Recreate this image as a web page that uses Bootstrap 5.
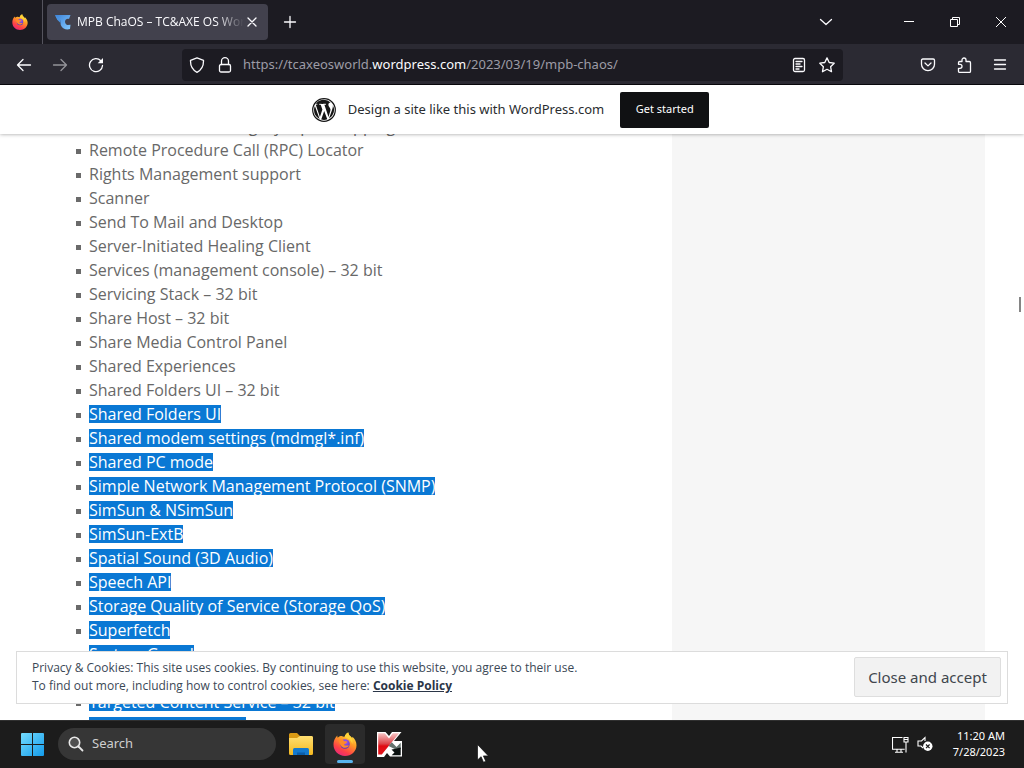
<!DOCTYPE html>
<html lang="en">
<head>
<meta charset="utf-8">
<meta name="viewport" content="width=device-width, initial-scale=1">
<title>MPB ChaOS – TC&amp;AXE OS World</title>
<link href="https://cdn.jsdelivr.net/npm/bootstrap@5.3.0/dist/css/bootstrap.min.css" rel="stylesheet">
<style>
body { font-family: "Noto Sans", "Open Sans", sans-serif; height: 100vh; background: #fff; }
svg { display: block; }
.tool { background: none; border: 0; padding: 0; color: #fbfbfe; display: flex; align-items: center; justify-content: center; flex: none; }
.ln { fill: none; stroke: currentColor; stroke-width: 1.3; stroke-linecap: round; stroke-linejoin: round; }

.title-strip { height: 44px; background: #1c1b22; }
.pinned { width: 43px; height: 44px; border-right: 1px solid #55545e; padding-right: 2px; }
.browser-tab { width: 221px; height: 36px; margin-left: 4px; padding: 0 8px; background: #42414d; border-radius: 4px; color: #fbfbfe; font-family: "Open Sans", sans-serif; font-size: 12px; }
.tab-name { flex: 1; overflow: hidden; white-space: nowrap; margin-left: 6px; -webkit-mask-image: linear-gradient(to left, transparent, #000 28px); mask-image: linear-gradient(to left, transparent, #000 28px); }
.new-tab { width: 43px; height: 36px; }
.win { width: 46px; height: 44px; }
.list-tabs { width: 46px; height: 44px; margin-right: 37px; }

.nav-strip { height: 41px; background: #2b2a33; border-bottom: 1px solid #08070c; padding: 1px 6px 0; }
.nav-strip .tool { width: 36px; height: 36px; }
.address { height: 32px; margin: 0 67px 0 68px; background: #1c1b22; border-radius: 4px; padding: 0 2px 0 1px; color: #9c9ba6; font-size: 13px; }
.address .tool { width: 28px; height: 32px; }
.url { white-space: nowrap; overflow: hidden; outline: 0; margin-left: 4px; }
.url b { font-weight: 400; color: #fbfbfe; }

.viewport { overflow: hidden; min-height: 0; }
.promo { top: 0; z-index: 3; height: 49px; padding-right: 3px; background: #fff; box-shadow: 0 0 4px rgba(0,0,0,.4); color: #2a2d30; font-size: 13px; }
.promo .start { height: 36px; width: 89px; background: #101113; border: 0; border-radius: 2px; color: #fff; font-size: 11px; }
.feature-list { padding: 29px 0 0 76px; font-family: "Open Sans", sans-serif; font-size: 16px; color: #686868; list-style: none; }
.feature-list li { height: 24px; display: flex; align-items: center; white-space: nowrap; }
.feature-list li::before { content: ""; width: 5px; height: 5px; margin-right: 8px; margin-top: 2px; background: #6a6a6a; }
.sel { background: #0a78d4; color: #fff; line-height: 18px; }
.side-panel { width: 313px; background: #f6f6f6; margin-right: 39px; }
.thumb { right: 3px; top: 212px; width: 2px; height: 15px; background: #858585; }
.cookies { left: 16px; right: 16px; bottom: 16px; z-index: 3; background: #fff; border: 1px solid #dcdcdc; padding: 5px 6px 6px 15px; font-family: "Open Sans", sans-serif; font-size: 12px; line-height: 18px; color: #3b4856; }
.cookies a { color: #2b3648; font-weight: 700; }
.cookies button { width: 147px; height: 40px; flex: none; background: #f2f2f2; border: 1px solid #dedede; border-radius: 2px; color: #40464d; font-family: "Noto Sans", sans-serif; font-size: 15px; }

.taskbar { height: 48px; background: #1c1c1c; border-top: 1px solid #303030; color: #fff; padding: 0 19px 1px 12px; }
.taskbar .tool { width: 40px; height: 40px; }
.find { width: 218px; height: 32px; border-radius: 16px; background: #363636; margin: 0 5px 0 6px; padding-left: 10px; }
.find input { background: none; border: 0; outline: 0; width: 160px; padding: 0; color: #fff; font-size: 13px; }
.find input::placeholder { color: #cfcfcf; opacity: 1; }
.running { background: #2b2b2b !important; border-radius: 4px; position: relative; }
.running::after { content: ""; position: absolute; bottom: 1px; left: 12px; width: 16px; height: 3px; border-radius: 2px; background: #58b4ee; }
.clock { min-width: 56px; font-size: 11px; line-height: 16px; }
.pointer { left: 477px; top: 744px; z-index: 9; }
</style>
</head>
<body class="d-flex flex-column overflow-hidden">
<svg width="0" height="0" class="position-absolute" aria-hidden="true">
  <defs>
    <linearGradient id="fire" x1=".8" y1="0" x2=".25" y2="1"><stop offset="0" stop-color="#fff04a"/><stop offset=".4" stop-color="#ff9a25"/><stop offset=".75" stop-color="#ff4048"/><stop offset="1" stop-color="#e5267e"/></linearGradient>
    <radialGradient id="orb" cx=".55" cy=".3" r=".7"><stop offset="0" stop-color="#a558f5"/><stop offset="1" stop-color="#5038bd"/></radialGradient>
    <symbol id="fox" viewBox="0 0 24 24">
      <path fill="url(#fire)" d="M2.500 5.800 4.200 3.600l.4 2.200C6 4.400 7.600 4 8.500 4l3 1C12 2.700 14 .8 15.300.4c.1 2 1.200 3 2.700 4.400.6.600.8 1.200 1 1.800l.5-1.900c2.300 2.200 4 5.100 4 8.500C23.500 19.300 18.400 24 12 24S.5 19 .5 12.800C.5 10 1.200 7.800 2.500 5.800z"/>
      <circle cx="12" cy="12" r="4.800" fill="url(#orb)"/>
      <path fill="#ff8a28" d="M5.500 8.500c2-1.700 4.500-1 5.800.7l3 .2c-.3 1.600-1.800 2-2.900 2.600-.6.700.1 1.500 1.200 1.600 1.500.1 2.400-.4 3.400 0-1.300 2.300-4.500 3-6.800 1.300-2.300-1.600-2.700-4-3.700-6.400z"/>
      <path fill="#ffd238" d="M15.300.4c.1 2 1.200 3 2.700 4.400 1.500 1.500 2 4.500 1.300 7.200-.5-3-3-5.300-7.800-7C12 2.700 14 .8 15.300.4z"/>
    </symbol>
    <linearGradient id="tile" x1="0" y1="0" x2="1" y2="1"><stop offset="0" stop-color="#74dcff"/><stop offset="1" stop-color="#139bea"/></linearGradient>
    <linearGradient id="gold" x1="0" y1="0" x2="0" y2="1"><stop offset="0" stop-color="#ffdf72"/><stop offset="1" stop-color="#f5b81e"/></linearGradient>
    <linearGradient id="sky" x1="0" y1="0" x2="1" y2="1"><stop offset="0" stop-color="#3c82d8"/><stop offset="1" stop-color="#83c9ff"/></linearGradient>
    <linearGradient id="rd" x1="0" y1="0" x2="0" y2="1"><stop offset="0" stop-color="#f7c3c3"/><stop offset=".5" stop-color="#dc4247"/><stop offset=".6" stop-color="#e00b12"/><stop offset="1" stop-color="#e2161d"/></linearGradient>
  </defs>
</svg>

<header>
  <div class="title-strip d-flex align-items-center">
    <button class="tool pinned" aria-label="Firefox View"><svg width="16" height="16"><use href="#fox"/></svg></button>
    <div class="browser-tab d-flex align-items-center">
      <svg width="16" height="16" viewBox="0 0 16 16"><path fill="url(#sky)" d="M0 1h15.500L14 5c-1.500-.8-4 .2-4 2.800 0 2 1.500 3.200 2.500 3.200l3-.3-.5 4.300c-3 1-7.500.2-9-3.500C5.300 9.800 5.600 8 6 6.500L2.500 6z"/><path fill="#4b93e0" d="M0 1l6 5.500L5.500 9 2.500 6z"/></svg>
      <span class="tab-name">MPB ChaOS – TC&amp;AXE OS World</span>
      <button class="tool" aria-label="Close tab"><svg width="16" height="16" viewBox="0 0 16 16"><path class="ln" d="M4 4l8 8M12 4l-8 8"/></svg></button>
    </div>
    <button class="tool new-tab" aria-label="New tab"><svg width="16" height="16" viewBox="0 0 16 16"><path class="ln" d="M8 2.500v11M2.500 8h11"/></svg></button>
    <button class="tool list-tabs ms-auto" aria-label="List all tabs"><svg width="16" height="16" viewBox="0 0 16 16"><path class="ln" d="M2.500 5.500 8 10.500l5.500-5"/></svg></button>
    <button class="tool win" aria-label="Minimize"><svg width="10" height="10"><path d="M0 4.500h10" stroke="#fff"/></svg></button>
    <button class="tool win" aria-label="Restore"><svg width="10" height="10"><path fill="none" stroke="#fff" d="M.5 2.500h7v7h-7zM2.500 2V.5h7v7H8"/></svg></button>
    <button class="tool win" aria-label="Close"><svg width="10" height="10"><path d="M0 0l10 10M10 0 0 10" stroke="#fff"/></svg></button>
  </div>
  <nav class="nav-strip d-flex align-items-center" aria-label="Browser">
    <button class="tool" aria-label="Back"><svg width="16" height="16" viewBox="0 0 16 16"><path class="ln" d="M14.500 8H1.500M7 2.500 1.500 8 7 13.500"/></svg></button>
    <button class="tool opacity-50" aria-label="Forward"><svg width="16" height="16" viewBox="0 0 16 16"><path class="ln" d="M1.500 8h13M9 2.500 14.500 8 9 13.500"/></svg></button>
    <button class="tool" aria-label="Reload"><svg width="16" height="16" viewBox="0 0 16 16"><path class="ln" d="M12.800 3.800A6.500 6.500 0 1 0 14.500 8.500"/><path fill="currentColor" d="M15 1v5.300H9.700z"/></svg></button>
    <div class="address d-flex align-items-center flex-grow-1">
      <button class="tool" aria-label="Tracking protection"><svg width="16" height="16" viewBox="0 0 16 16"><path class="ln" d="M8 .8 14.500 3.300c.2 5.500-1.500 9.500-6.500 12C3 12.800 1.300 8.800 1.500 3.300z"/></svg></button>
      <button class="tool" aria-label="Site information"><svg width="16" height="16" viewBox="0 0 16 16"><rect class="ln" x="2.500" y="7.500" width="11" height="7.500" rx="1.500"/><path class="ln" d="M4.500 7.500V4.200a3.500 3.500 0 0 1 7 0v3.300"/></svg></button>
      <div class="url flex-grow-1" role="textbox" contenteditable="true" spellcheck="false" aria-label="Address">https://tcaxeosworld.<b>wordpress.com</b>/2023/03/19/mpb-chaos/</div>
      <button class="tool" aria-label="Reader view"><svg width="16" height="16" viewBox="0 0 16 16"><rect class="ln" x="2.500" y="1.500" width="11" height="13" rx="1.500"/><path class="ln" d="M5 4.500h6M5 7h4M5 9.500h6M5 12h3"/></svg></button>
      <button class="tool" aria-label="Bookmark"><svg width="16" height="16" viewBox="0 0 16 16"><path class="ln" d="M8 .9 10.200 5.500l5 .7-3.600 3.500.9 5L8 12.300l-4.500 2.400.9-5L.8 6.200l5-.7z"/></svg></button>
    </div>
    <button class="tool" aria-label="Pocket"><svg width="16" height="16" viewBox="0 0 16 16"><path class="ln" d="M2.800 2h10.400c.8 0 1.300.5 1.300 1.300V7.200a6.500 6.500 0 0 1-13 0V3.300C1.500 2.500 2 2 2.800 2z"/><path class="ln" d="M5 6l3 2.900L11 6"/></svg></button>
    <button class="tool" aria-label="Extensions"><svg width="16" height="16" viewBox="0 0 16 16"><path class="ln" d="M6 4.500V3a2 2 0 0 1 4 0v1.500h3.300c.7 0 1.200.5 1.200 1.200v8.600c0 .7-.5 1.200-1.200 1.200H3.700c-.7 0-1.200-.5-1.200-1.200v-3H4a2 2 0 0 0 0-4H2.500V5.700c0-.7.500-1.200 1.200-1.200z"/></svg></button>
    <button class="tool" aria-label="Menu"><svg width="16" height="16" viewBox="0 0 16 16"><path class="ln" d="M2.500 3h11M2.500 7.500h11M2.500 12h11"/></svg></button>
  </nav>
</header>

<main class="viewport position-relative d-flex flex-grow-1">
  <div class="promo position-absolute w-100 d-flex align-items-center justify-content-center">
    <svg width="24" height="24" viewBox="0 0 24 24"><circle cx="12" cy="12" r="11.300" fill="none" stroke="#151515" stroke-width="1.200"/><path fill="#151515" d="M2 12c0-1.500.3-2.800.9-4.100l4.700 13A10 10 0 0 1 2 12zm16.500-.5c0 1-.4 2.200-.9 3.800l-1.100 3.800-4.100-12.300 1.300-.1c.6-.1.500-1-.1-.9 0 0-1.800.1-3 .1l-3-.1c-.6 0-.7.900-.1.900l1.200.1 1.700 4.800-2.500 7.300L3.800 6.700l1.300-.1c.6-.1.5-1-.1-.9l-1.400.1a10 10 0 0 1 15.100-1.200c-1.500-.2-2.300 1-2.300 2.100 0 1 .6 1.800 1.200 2.800.5.800.9 1.700.9 2zM12.200 12.900l3.100 8.400A10 10 0 0 1 9.200 21.500zM20.800 7.200A10 10 0 0 1 17 20.600l3.100-8.800c.5-1.500.8-2.700.8-3.800z"/></svg>
    <span class="ms-2 ps-1 me-3">Design a site like this with WordPress.com</span>
    <button class="start">Get started</button>
  </div>
  <article class="flex-grow-1">
    <ul class="feature-list mb-0">
      <li>Remote Audio and Legacy Input Mapping</li>
      <li>Remote Procedure Call (RPC) Locator</li>
      <li>Rights Management support</li>
      <li>Scanner</li>
      <li>Send To Mail and Desktop</li>
      <li>Server-Initiated Healing Client</li>
      <li>Services (management console) – 32 bit</li>
      <li>Servicing Stack – 32 bit</li>
      <li>Share Host – 32 bit</li>
      <li>Share Media Control Panel</li>
      <li>Shared Experiences</li>
      <li>Shared Folders UI – 32 bit</li>
      <li><span class="sel">Shared Folders UI</span></li>
      <li><span class="sel">Shared modem settings (mdmgl*.inf)</span></li>
      <li><span class="sel">Shared PC mode</span></li>
      <li><span class="sel">Simple Network Management Protocol (SNMP)</span></li>
      <li><span class="sel">SimSun &amp; NSimSun</span></li>
      <li><span class="sel">SimSun-ExtB</span></li>
      <li><span class="sel">Spatial Sound (3D Audio)</span></li>
      <li><span class="sel">Speech API</span></li>
      <li><span class="sel">Storage Quality of Service (Storage QoS)</span></li>
      <li><span class="sel">Superfetch</span></li>
      <li><span class="sel">System Guard</span></li>
      <li></li>
      <li><span class="sel">Targeted Content Service – 32 bit</span></li>
      <li><span class="sel">Telnet Server – 32 bit</span></li>
    </ul>
  </article>
  <aside class="side-panel flex-shrink-0"></aside>
  <div class="thumb position-absolute"></div>
  <section class="cookies position-absolute d-flex align-items-center justify-content-between" aria-label="Cookie notice">
    <div>Privacy &amp; Cookies: This site uses cookies. By continuing to use this website, you agree to their use.<br>To find out more, including how to control cookies, see here: <a href="#">Cookie Policy</a></div>
    <button>Close and accept</button>
  </section>
</main>

<footer class="taskbar d-flex align-items-center flex-shrink-0">
  <button class="tool" aria-label="Start"><svg width="23" height="23" viewBox="0 0 23 23"><path fill="url(#tile)" d="M0 1q0-1 1-1h10v11H0zM12 0h10q1 0 1 1v10H12zM0 12h11v11H1q-1 0-1-1zM12 12h11v10q0 1-1 1H12z"/></svg></button>
  <div class="find d-flex align-items-center">
    <svg width="16" height="16" viewBox="0 0 16 16"><circle cx="6.500" cy="6.500" r="5.200" fill="#505050" stroke="#e8e8e8" stroke-width="1.600"/><path d="M10.500 10.500l4 4" stroke="#e8e8e8" stroke-width="1.800" stroke-linecap="round"/></svg>
    <input class="ms-2" type="search" placeholder="Search" aria-label="Search">
  </div>
  <button class="tool" aria-label="File Explorer"><svg width="24" height="22" viewBox="0 0 24 22"><path fill="#d99a14" d="M0 1.500Q0 0 1.500 0H8l3 3h11q2 0 2 2v4H0z"/><path fill="url(#gold)" d="M0 5h8l3-2h11.500Q24 3 24 4.500v16q0 1.500-1.500 1.500h-21Q0 22 0 20.500z"/><path fill="#1479cd" d="M4 22v-5.500Q4 15 5.500 15h13q1.500 0 1.500 1.500V22z"/><path fill="#0b5da8" d="M8 22v-2.500h8V22z"/></svg></button>
  <button class="tool running ms-1" aria-label="Firefox"><svg width="24" height="24"><use href="#fox"/></svg></button>
  <button class="tool ms-1" aria-label="Kaspersky"><svg width="25" height="25" viewBox="0 0 25 25"><path fill="#fff" d="M0 0h8.500l3.500 4L15 0h9.500L17 9h8v15.500H13L10 21l-3 4H0z"/><path fill="url(#rd)" d="M1.200 1.200h6.600L12 6.500l3.800-5.300h6.300L4.800 22.500H1.200z"/><path fill="#64736e" d="m11.500 14 3.300-3.800 4.700 4.800 4.200-4.300V17h-6z"/><path fill="#0b1110" d="m17.500 17 6.200-1.500v7.800h-9l2.800-2.800-3-3z"/></svg></button>
  <div class="ms-auto d-flex align-items-center">
    <svg width="17" height="17" viewBox="0 0 17 17" aria-label="Network" role="img"><path fill="none" stroke="#fff" stroke-width="1.100" d="M10.500 1.500h-10v11.800h12.200M12 1.500h4v4.500h-4zM14 6v10.500M12 3.500h4M3 16.300h8M5 13.500v2.500M9 13.500v2.500"/></svg>
    <svg class="ms-2" width="16" height="16" viewBox="0 0 16 16" aria-label="Sound muted" role="img"><path fill="none" stroke="#fff" stroke-width="1.100" d="M8 5V1.500L4.500 5H1v5h3l2 2"/><circle cx="10.800" cy="10.300" r="4.700" fill="#fff"/><path d="M9 8.500l3.600 3.600M12.600 8.500 9 12.100" stroke="#1c1c1c" stroke-width="1.200"/></svg>
    <div class="clock text-end ms-3">11:20 AM<br>7/28/2023</div>
  </div>
</footer>
<svg class="pointer position-absolute" width="12" height="19" viewBox="0 0 12 19" aria-hidden="true"><path fill="#fff" stroke="#111" stroke-width=".7" d="M.5.500v15.500l3.600-3.300 2.400 5.600 2.300-1-2.400-5.400h5z"/></svg>
<script src="https://cdn.jsdelivr.net/npm/bootstrap@5.3.0/dist/js/bootstrap.bundle.min.js"></script>
</body>
</html>
